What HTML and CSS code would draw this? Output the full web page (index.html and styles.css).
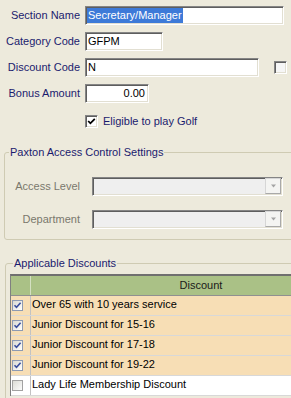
FILE: index.html
```html
<!DOCTYPE html>
<html>
<head>
<meta charset="utf-8">
<link rel="stylesheet" href="styles.css">
</head>
<body>
<div class="page">
  <div class="row"><span class="lbl">Section Name</span><div class="tb w-section"><span class="txt sel">Secretary/Manager</span></div></div>
  <div class="row"><span class="lbl">Category Code</span><div class="tb w-cat"><span class="txt">GFPM</span></div></div>
  <div class="row"><span class="lbl">Discount Code</span><div class="tb w-disc"><span class="txt">N</span></div><span class="cb cb-disc"></span></div>
  <div class="row"><span class="lbl">Bonus Amount</span><div class="tb w-bonus"><span class="txt">0.00</span></div></div>
  <div class="elig">
    <span class="cb"><svg width="9" height="9" viewBox="0 0 9 9"><path d="M1.2 4 L3.4 6.3 L7.8 1.8" fill="none" stroke="#000" stroke-width="1.8"/></svg></span>
    <span class="elig-text">Eligible to play Golf</span>
  </div>

  <fieldset class="grp g1">
    <legend>Paxton Access Control Settings</legend>
    <div class="crow first"><span class="lbl2">Access Level</span><div class="combo"><span class="ddbtn"><svg width="7" height="4" viewBox="0 0 7 4"><polygon points="1,0.5 6,0.5 3.5,3.5" fill="#a4a4a4"/></svg></span></div></div>
    <div class="crow"><span class="lbl2">Department</span><div class="combo"><span class="ddbtn"><svg width="7" height="4" viewBox="0 0 7 4"><polygon points="1,0.5 6,0.5 3.5,3.5" fill="#a4a4a4"/></svg></span></div></div>
  </fieldset>

  <fieldset class="grp g2">
    <legend>Applicable Discounts</legend>
    <div class="grid">
      <div class="gr head"><div class="rh"></div><div class="cell">Discount</div></div>
      <div class="gr on"><div class="rh"><span class="xcb"><svg width="9" height="9" viewBox="0 0 9 9"><path d="M1.5 4.2 L3.5 6.4 L7.6 1.8" fill="none" stroke="#3b4f9e" stroke-width="1.6"/></svg></span></div><div class="cell">Over 65 with 10 years service</div></div>
      <div class="gr on"><div class="rh"><span class="xcb"><svg width="9" height="9" viewBox="0 0 9 9"><path d="M1.5 4.2 L3.5 6.4 L7.6 1.8" fill="none" stroke="#3b4f9e" stroke-width="1.6"/></svg></span></div><div class="cell">Junior Discount for 15-16</div></div>
      <div class="gr on"><div class="rh"><span class="xcb"><svg width="9" height="9" viewBox="0 0 9 9"><path d="M1.5 4.2 L3.5 6.4 L7.6 1.8" fill="none" stroke="#3b4f9e" stroke-width="1.6"/></svg></span></div><div class="cell">Junior Discount for 17-18</div></div>
      <div class="gr on"><div class="rh"><span class="xcb"><svg width="9" height="9" viewBox="0 0 9 9"><path d="M1.5 4.2 L3.5 6.4 L7.6 1.8" fill="none" stroke="#3b4f9e" stroke-width="1.6"/></svg></span></div><div class="cell">Junior Discount for 19-22</div></div>
      <div class="gr off"><div class="rh"><span class="xcb empty"></span></div><div class="cell">Lady Life Membership Discount</div></div>
    </div>
  </fieldset>
</div>
</body>
</html>
```
FILE: styles.css
```css
* { box-sizing: border-box; }
html, body { margin: 0; padding: 0; }
body {
  background: #EDEADC;
  font-family: "Liberation Sans", Arial, sans-serif;
  font-size: 11px;
  color: #1b1b6e;
  width: 291px;
  height: 398px;
  overflow: hidden;
}
.page { padding-top: 6px; }

.row { display: flex; align-items: center; height: 19px; margin-bottom: 7px; }
.lbl { width: 80px; margin-right: 5px; text-align: right; white-space: nowrap; line-height: 19px; }

.tb {
  height: 19px;
  background: #fff;
  border: 1px solid;
  border-color: #858585 #fff #fff #858585;
  box-shadow: inset 1px 1px 0 #5e5e5e, inset -1px -1px 0 #e2dfd2;
  display: flex;
  align-items: center;
  padding-left: 1px;
  color: #000;
}
.txt { line-height: 15px; padding: 0 1px; white-space: nowrap; }
.sel { background: #3D7AD8; color: #fff; }
.w-section { width: 199px; }
.w-cat { width: 78px; }
.w-disc { width: 174px; }
.w-bonus { width: 64px; justify-content: flex-end; padding-right: 2px; }

.cb {
  width: 13px; height: 13px;
  background: #fff;
  border: 1px solid;
  border-color: #858585 #fff #fff #858585;
  box-shadow: inset 1px 1px 0 #5e5e5e, inset -1px -1px 0 #e2dfd2;
  display: flex; align-items: center; justify-content: center;
  flex: none;
}
.cb-disc { margin-left: 15px; background: #f6f6f6; }

.elig { display: flex; align-items: center; height: 13px; margin-top: 12px; padding-left: 85px; }
.elig .cb { margin-right: 5px; }
.elig-text { line-height: 13px; white-space: nowrap; }

.grp {
  border: 1px solid #CFCBB3;
  border-radius: 3px;
  padding: 0;
  margin: 0;
  min-width: 0;
}
.grp legend { padding: 0 1px; margin-left: 4px; line-height: 13px; font-size: 11px; color: #1b1b6e; white-space: nowrap; }
.g1 { margin: 18px 0 0 4px; width: 330px; padding-bottom: 10px; }
.g2 { margin: 17px 0 0 5px; width: 380px; height: 200px; }
.g2 legend { margin-left: 7px; }

.crow { display: flex; align-items: center; height: 19px; }
.crow.first { margin-top: 18px; }
.crow + .crow { margin-top: 14px; }
.lbl2 { width: 75px; margin-right: 12px; text-align: right; color: #7a786c; white-space: nowrap; line-height: 19px; }
.combo {
  width: 191px; height: 19px;
  background: #EFEFEF;
  border: 1px solid;
  border-color: #858585 #fff #fff #858585;
  box-shadow: inset 1px 1px 0 #5e5e5e, inset -1px -1px 0 #e2dfd2;
  display: flex; justify-content: flex-end; align-items: flex-start;
  padding: 0 1px 0 0;
}
.ddbtn {
  width: 16px; height: 16px;
  background: #F4F4F2;
  border: 1px solid;
  border-color: #d6d6d6 #a9a9a9 #a9a9a9 #d6d6d6;
  display: flex; align-items: center; justify-content: center;
}

.grid {
  margin: 4px 0 0 4px;
  width: 360px;
  border-left: 1px solid #808080;
  border-top: 2px solid #6f6f6f;
}
.gr { display: flex; height: 20px; border-bottom: 1px solid #d8d8d8; }
.head { background: #AAC186; border-bottom-color: #909090; }
.on { background: #F7DEB5; }
.off { background: #fff; }
.rh { width: 20px; flex: none; border-right: 1px solid #c2c2c2; display: flex; align-items: center; padding-left: 1px; }
.head .rh { border-right-color: #d4e0c2; }
.cell { flex: 1; padding-left: 1px; line-height: 17px; color: #000; white-space: nowrap; }
.head .cell { text-align: center; color: #1a1a1a; line-height: 19px; }
.xcb {
  width: 11px; height: 11px;
  border: 1px solid #8d9ab2;
  background: linear-gradient(135deg, #d9d9d2, #ffffff);
  display: flex; align-items: center; justify-content: center;
}
.xcb.empty { border-color: #a2a2a2; background: linear-gradient(135deg, #dcdcd6, #fbfbfb); }
```
